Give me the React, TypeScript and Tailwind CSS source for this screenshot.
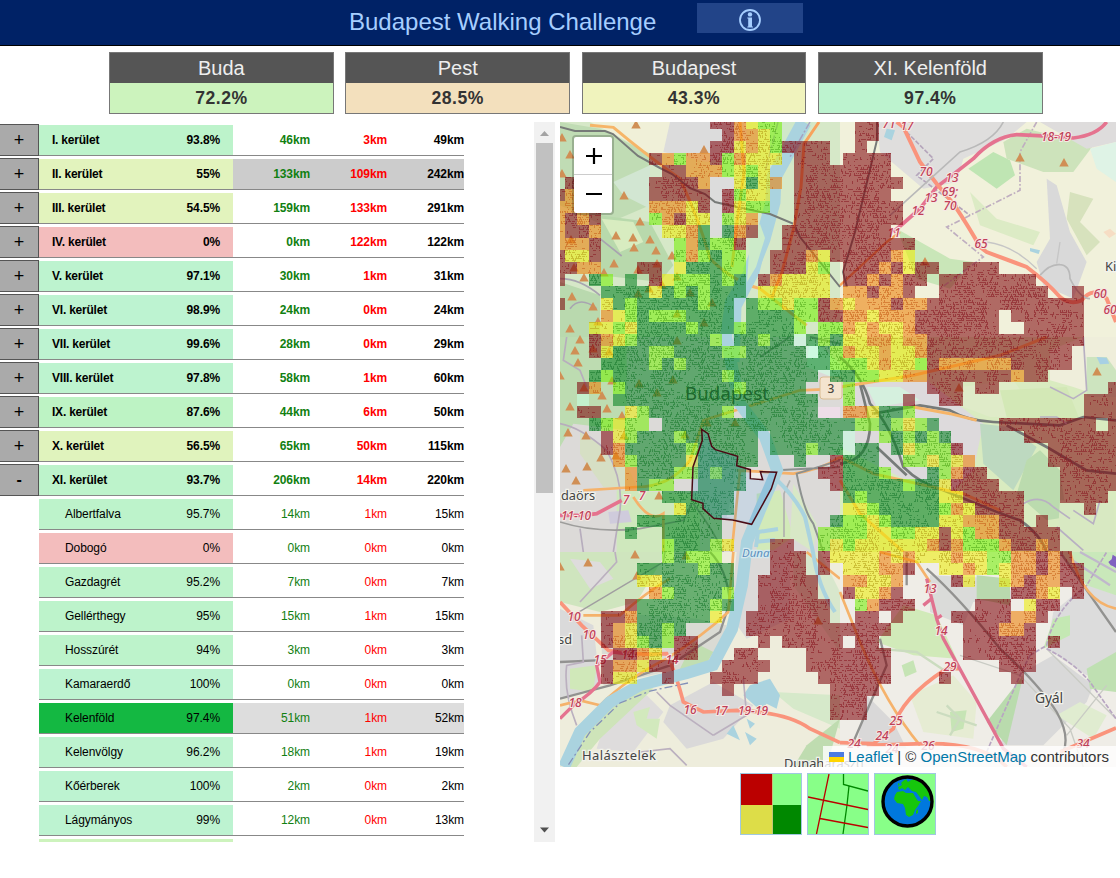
import React from "react";

type Row = { name: string; pct: string; done: string; left: string; total: string; tint: string; sub?: boolean; open?: boolean; rest?: string };

const MINT = "bg-[#bdf3cb]";
const LIME = "bg-[#e2f3bd]";
const ROSE = "bg-[#f3bdbd]";

const rows: Row[] = [
  { name: "I. kerület", pct: "93.8%", done: "46km", left: "3km", total: "49km", tint: MINT },
  { name: "II. kerület", pct: "55%", done: "133km", left: "109km", total: "242km", tint: LIME, rest: "bg-[#cccccc]" },
  { name: "III. kerület", pct: "54.5%", done: "159km", left: "133km", total: "291km", tint: LIME },
  { name: "IV. kerület", pct: "0%", done: "0km", left: "122km", total: "122km", tint: ROSE },
  { name: "V. kerület", pct: "97.1%", done: "30km", left: "1km", total: "31km", tint: "bg-[#bdf3cf]" },
  { name: "VI. kerület", pct: "98.9%", done: "24km", left: "0km", total: "24km", tint: "bg-[#bdf3d1]" },
  { name: "VII. kerület", pct: "99.6%", done: "28km", left: "0km", total: "29km", tint: "bg-[#bdf3d1]" },
  { name: "VIII. kerület", pct: "97.8%", done: "58km", left: "1km", total: "60km", tint: "bg-[#bdf3cf]" },
  { name: "IX. kerület", pct: "87.6%", done: "44km", left: "6km", total: "50km", tint: "bg-[#bdf3c4]" },
  { name: "X. kerület", pct: "56.5%", done: "65km", left: "50km", total: "115km", tint: "bg-[#e0f3bd]" },
  { name: "XI. kerület", pct: "93.7%", done: "206km", left: "14km", total: "220km", tint: MINT, open: true },
  { name: "Albertfalva", pct: "95.7%", done: "14km", left: "1km", total: "15km", tint: MINT, sub: true },
  { name: "Dobogó", pct: "0%", done: "0km", left: "0km", total: "0km", tint: ROSE, sub: true },
  { name: "Gazdagrét", pct: "95.2%", done: "7km", left: "0km", total: "7km", tint: MINT, sub: true },
  { name: "Gellérthegy", pct: "95%", done: "15km", left: "1km", total: "15km", tint: MINT, sub: true },
  { name: "Hosszúrét", pct: "94%", done: "3km", left: "0km", total: "3km", tint: MINT, sub: true },
  { name: "Kamaraerdő", pct: "100%", done: "0km", left: "0km", total: "0km", tint: "bg-[#bdf3d1]", sub: true },
  { name: "Kelenföld", pct: "97.4%", done: "51km", left: "1km", total: "52km", tint: "bg-[#14b842]", sub: true, rest: "bg-[#dddddd]" },
  { name: "Kelenvölgy", pct: "96.2%", done: "18km", left: "1km", total: "19km", tint: "bg-[#bdf3cf]", sub: true },
  { name: "Kőérberek", pct: "100%", done: "2km", left: "0km", total: "2km", tint: "bg-[#bdf3d1]", sub: true },
  { name: "Lágymányos", pct: "99%", done: "12km", left: "0km", total: "13km", tint: "bg-[#bdf3d1]", sub: true },
  { name: "", pct: "", done: "", left: "", total: "", tint: "bg-[#cdf3bd]", sub: true },
];

const cards = [
  { title: "Buda", pct: "72.2%", tint: "bg-[#ccf3bd]" },
  { title: "Pest", pct: "28.5%", tint: "bg-[#f3e0bd]" },
  { title: "Budapest", pct: "43.3%", tint: "bg-[#f0f3bd]" },
  { title: "XI. Kelenföld", pct: "97.4%", tint: "bg-[#bdf3cf]" },
];

/* Grid rows from north to south; each run is "startColumn:cells". */
const grid = [
  "13:RROYLL 25:RR",
  "14:ROOYL 25:RR",
  "13:RRYOYLRRRR 25:R",
  "8:ROLOORLOYYY 20:RRR 24:RRRR",
  "9:RROOOLYLY 20:RRRRRRRR",
  "1:R 8:RRRRO 15:YGYO 20:RRRRRRRRR",
  "0:ROOO 8:RRRRR 14:RLYY 20:RRRRRRRR",
  "0:OOOO 8:OOOYR 14:RYLL 20:RRRRRRRRR",
  "0:OROR 8:LORYY 14:LYO 20:RRRRRRRRR",
  "0:ORRO 9:YYOG 14:GOR 19:RRRRRRRRR",
  "0:OOOR 10:LOGLLR 19:RRRRRRRRRRR",
  "0:RYYR 10:LOLGLL 18:RRROYRRRRROY",
  "0:RROO 7:RR 10:YGGGLL 18:RRRYL 24:RRRORYRR 34:RRR",
  "0:R 3:GL 6:G 8:RYLLLGLG 17:ROYYYY 24:RRORORR 32:RRRRRRRR",
  "4:GGGGYGLGLGGG 17:YYYYYY 24:OOROOR 32:RRRRRRRRR 43:R",
  "0:R 4:YGLGGGGGLGG 16:GLLYLLROYOOOROORRRRRRRRRRRRR",
  "4:OYLGLLLGGGG 16:GGGGLLRROOYOOORRRRRRR 38:RRRRRR",
  "3:YYLYGGGGLGGGLGGGGL 22:LLOYOYYORRRRRRR 39:RRRRR",
  "3:ROYLGGGGGGL 15:GGLGGWGLGYYOOYOORRRRRRRRRRRRR",
  "3:RYGGGLLGGGGLLGGGGGWGLOYYOYYORRRRRRRRRRRR",
  "4:GGGGLGLGGGGGGGGGGGGLLLYOYYLROOOOOORRRRR",
  "3:GLGGGGGGGGGLGGGGGGG 23:GGLLYYOORRRRRRRORR",
  "2:RO 5:LGGGGGGGGGLGGGGG 24:L 31:RRR 35:RR 46:R",
  "2:W 5:GGGGGGGGGGGGGGGGG 24:L 29:R 32:RR 44:RRR",
  "2:RR 6:YLGGGGGGL 16:GGGGGG 24:OOYGGL 44:RRR",
  "3:GLYLL 9:GGGGGGGGGGGGGGGGLLGLYLG 37:RRRRRRRR 46:R",
  "4:RYLGGGLGGGGGG 18:GGGGGGW 27:LGLGLG 39:RRRRRRRR",
  "4:ROGGGGGLGGGGG 18:GGGLGGWGG 28:GYLLLR 41:RRRRRR",
  "5:OLGGGGYGGGGG 20:G 23:RGGG 29:LLYLYO 41:RRRRRR",
  "6:OGGGLLGLGG 22:RRGGGL 31:GLORR 42:RRRRR",
  "6:OGLL 12:GGGG 23:RGGGGGLGGYRRRR 42:RRRRR",
  "9:GGGGGG 24:GLGGGGGGYYRRRRR 42:RRRR",
  "10:YGGGG 24:YYLGGGGGLOYRRRR 44:R",
  "7:GGGGGGG 23:GLLYLGGGGYYOOORR 40:R",
  "6:G 9:GGGGG 22:LLLLYYLLYYRYLOORRRRR",
  "9:LGGGLY 18:RR 22:LYLYYYYYYOROLLLORROR",
  "9:LGLLL 18:RRR 22:RYYYYOYOYYYOYYLLOOROR",
  "7:GGGGGLGG 18:RRR 22:R 24:YYYOOR 32:YYOYLYOORORR",
  "7:YYGGGGGG 17:RRRRR 24:OOYYO 33:RY 37:YOROORR",
  "8:OLGGGGL 17:RRRRR 24:RYYOR 38:RROY 43:R",
  "6:RGGGGGGLG 17:RRRRRR 25:LORRR 35:RRR 39:YRR",
  "4:RROGGGGGGY 16:RRRRRRR 25:RR 28:R 33:RRRRROOR",
  "4:ROYGGLG 16:RRRRRRRRRRRR 34:RRROOR",
  "4:ROYLGLRR 17:R 19:RRRRR 25:RR 34:RRRRRR 41:R",
  "5:RROY 10:RR 15:RR 21:RRRRRRR 34:RRRRRR",
  "4:ROOYRR 14:RRRR 21:RRRRRRR 37:RRR",
  "4:RYY 9:R 13:RRRR 22:RRRRRR 32:R 38:R",
  "14:R 23:RRRR",
  "23:RRR",
  "23:RRR",
];

const fills: Record<string, string> = { R: "#7c0008", O: "#ee7c00", Y: "#eeee00", L: "#72f000", G: "#007e1c", W: "#c8ffe0" };
const streets: Record<string, string> = { R: "#8b1c24", O: "#c8621c", Y: "#b8a41c", L: "#55ac1c", G: "#1c7c30" };

type Cell = { x: number; y: number; kind: string };

const edgeX = (c: number) => (c <= 0 ? 0 : Math.round(5 + (c - 1) * 12.067));
const edgeY = (r: number) => (r <= 0 ? 0 : Math.round(7 + (r - 1) * 12.06));

const cells: Cell[] = [];
grid.forEach((line, y) =>
  line.split(" ").forEach((run) => {
    const [start, kinds] = run.split(":");
    kinds.split("").forEach((kind, i) => cells.push({ x: Number(start) + i, y, kind }));
  })
);

function buildShapes() {
  const area: Record<string, string> = {};
  const lines: Record<string, string> = {};
  const taken = new Set(cells.map((c) => c.x + "," + c.y));
  let seed = 1234567;
  const rnd = () => {
    seed = (seed * 1103515245 + 12345) % 2147483648;
    return seed / 2147483648;
  };
  cells.forEach(({ x, y, kind }) => {
    const x0 = edgeX(x);
    const x1 = edgeX(x + 1);
    const y0 = edgeY(y);
    const y1 = edgeY(y + 1);
    area[kind] = (area[kind] || "") + `M${x0} ${y0}H${x1}V${y1}H${x0}Z`;
    if (kind === "W") return;
    const border = !taken.has(x + 1 + "," + y) || !taken.has(x - 1 + "," + y) || !taken.has(x + "," + (y + 1)) || !taken.has(x + "," + (y - 1));
    const roll = rnd();
    const density = border ? roll * 0.45 : roll < 0.15 ? 0.1 : 0.4 + roll * 0.25;
    let d = "";
    for (let j = y0; j < y1; j += 2) {
      for (let i = x0 + ((j >> 1) & 1); i < x1; i += 2) {
        if (rnd() > density) continue;
        const way = rnd();
        const w = Math.min(3, x1 - i);
        const h = Math.min(3, y1 - j);
        d += way < 0.4 ? `M${i} ${j}h${w}v1h-${w}z` : way < 0.8 ? `M${i} ${j}h1v${h}h-1z` : `M${i} ${j}h1v1h-1z`;
      }
    }
    lines[kind] = (lines[kind] || "") + d;
  });
  return { area, lines };
}
const shapes = buildShapes();

const peaks: [number, number][] = [
  [76, 3], [2, 16], [10, 33], [2, 52], [144, 28], [64, 74], [80, 100], [56, 114], [73, 116], [90, 118], [74, 126], [96, 129], [112, 134], [54, 142], [97, 142], [78, 148], [44, 151], [24, 156], [14, 146], [11, 118], [117, 155], [102, 163], [89, 167], [78, 172], [130, 171], [12, 175], [33, 185], [38, 200], [152, 181], [117, 192], [144, 201], [10, 207], [20, 218], [15, 229], [18, 241], [0, 254], [117, 219], [33, 227], [49, 230], [52, 259], [24, 266], [79, 262], [97, 271], [113, 258], [42, 274], [10, 285], [47, 287], [62, 294], [147, 301], [175, 301], [125, 313], [64, 314], [8, 311], [26, 314], [56, 334], [41, 336], [27, 345], [6, 347], [16, 359], [99, 374], [28, 441], [75, 433], [126, 434], [77, 454], [0, 445], [258, 499], [460, 36], [504, 41], [365, 140], [399, 266], [537, 250],
];

const quads: [number, number][] = [[0, 0], [280, 0], [0, 215], [280, 215], [0, 430], [280, 430]];

/* One quadrant of the base map, on a 3x finer canvas. */
function Quad({ n, children }: { n: number; children: React.ReactNode }) {
  return <g transform={`translate(${quads[n][0]} ${quads[n][1]}) scale(0.33333)`}>{children}</g>;
}

function RoadNo({ x, y, children }: { x: number; y: number; children: string }) {
  return (
    <text x={x} y={y} fontSize="12" fontStyle="italic" fontWeight="500" fill="#bf4058" stroke="#f6e9e4" strokeWidth="2" paintOrder="stroke" textAnchor="middle">
      {children}
    </text>
  );
}

function BaseMap() {
  return (
    <>
      <rect width="556" height="645" fill="#eeeadf" />
      <Quad n={0}>
        <path d="M0 0H840V645H0Z" fill="#d6e8c8" />
        <path d="M90 0H460L440 100L270 95L150 30Z" fill="#f0f0d8" />
        <path d="M330 0H560V90L440 120L310 90Z" fill="#dcdcdc" />
        <path d="M0 0L120 20L270 95V250L130 310L0 250Z" fill="#c0dcb4" />
        <path d="M160 180L270 130V260L190 220Z" fill="#d2e6d2" />
        <path d="M120 280L270 300L340 430L300 480L120 460Z" fill="#b8d9ac" />
        <path d="M125 290L220 300L250 360L180 390Z" fill="#d8ecc0" />
        <path d="M0 480L120 520V645H0Z" fill="#b9d9ae" />
        <path d="M450 160L525 170V340L450 345Z" fill="#dcdcdc" />
        <path d="M660 0H760L700 130L640 80Z" fill="#d0e8c8" />
        <path d="M0 470Q60 470 120 520M30 560Q60 520 110 560M120 350L185 402" fill="none" stroke="#a8a4b0" strokeWidth="5" />
        <path d="M90 10L160 16Q260 100 360 170Q420 300 450 410Q520 480 600 500L740 610" fill="none" stroke="#f6b568" strokeWidth="9" />
      </Quad>
      <Quad n={1}>
        <path d="M0 0H828V645H0Z" fill="#f1f1db" />
        <path d="M110 0H560L500 50L370 110L350 180L250 200L120 90Z" fill="#dfdedd" />
        <path d="M460 90L510 115L525 160L470 200L385 140Z" fill="#bfe5b3" />
        <path d="M490 60L560 20L760 70L700 150L610 150L500 110Z" fill="#cde3bb" />
        <path d="M600 0H828V60L740 80Z" fill="#dedcdc" />
        <path d="M750 80L828 60V180L770 140Z" fill="#dff3e6" />
        <path d="M620 170L650 190L690 330L740 420L700 530L610 490L590 420L630 350Z" fill="#d9d9d9" />
        <path d="M690 210L760 230L720 300L780 360L740 400L680 290Z" fill="#d7e2bd" />
        <path d="M170 320L330 410L400 420L330 500L230 470Z" fill="#c9e6b8" />
        <path d="M390 210L470 290L600 330L580 370L420 310Z" fill="#dcebc5" />
        <path d="M140 20L165 25L155 55L132 45Z" fill="#aad3df" />
        <path d="M570 378L600 385L596 396L570 388Z" fill="#aad3df" />
        <path d="M790 330L810 320L828 335L808 348Z" fill="#f6ddc4" />
        <path d="M590 0L540 90V205L320 315L430 405L300 500" fill="none" stroke="#bfaec0" strokeWidth="5" strokeDasharray="18 6 5 6" />
        <path d="M200 30L280 110L230 160L390 280" fill="none" stroke="#b5a5bb" strokeWidth="5" strokeDasharray="14 5" />
        <path d="M160 330L240 260L290 195Q350 150 400 110Q460 45 530 38Q630 42 700 48Q770 40 800 0" fill="none" stroke="#e5738f" strokeWidth="11" />
        <path d="M170 0L190 15L240 120L290 185L340 245Q390 320 420 375L440 390L560 435Q620 480 660 525Q690 550 725 535Q760 490 800 530L828 600" fill="none" stroke="#fa947c" strokeWidth="12" />
        <path d="M0 490L140 360L180 330" fill="none" stroke="#f8a35c" strokeWidth="7" />
        <path d="M150 280L360 90Q460 60 490 0M600 460Q630 425 660 428Q690 430 690 470Q720 530 750 530" fill="none" stroke="#b9b9b9" strokeWidth="5" />
        <path d="M660 360L650 425M440 360Q520 370 590 440" fill="none" stroke="#c6c6c6" strokeWidth="4" />
      </Quad>
      <Quad n={2}>
        <path d="M0 0H840V645H0Z" fill="#dcdad8" />
        <path d="M0 0H200V280L40 260L0 330Z" fill="#bddcb1" />
        <path d="M60 280L200 380L230 450H130L60 350Z" fill="#d6dfc4" />
        <path d="M170 460L420 470V645H170Z" fill="#cfe8bd" />
        <path d="M530 400L640 400L590 560L500 540Z" fill="#f0eae6" />
        <path d="M590 470L660 460L700 600L640 640H590Z" fill="#d2eab9" />
        <path d="M700 440L770 560L760 645L690 600Z" fill="#d8e8c6" />
        <path d="M740 210L840 210V250H740Z" fill="#eedde8" />
        <path d="M750 0L840 80V130L740 90Z" fill="#d4f2e0" />
        <path d="M145 525L205 520L215 555L150 560Z" fill="#cfcbdc" />
        <path d="M20 0L10 70L60 100L80 150M0 260Q60 270 140 340Q190 430 180 520L160 645M60 575L70 645" fill="none" stroke="#b7adbd" strokeWidth="5" />
        <path d="M0 555Q110 590 240 575L370 550L395 500M400 500Q460 580 490 645" fill="none" stroke="#9d9d9b" strokeWidth="5" />
        <path d="M0 535H70L110 530L185 490" fill="none" stroke="#e5738f" strokeWidth="11" />
        <path d="M70 460L230 450Q330 450 390 370L430 250L720 160L840 155M220 480Q270 560 310 530V645M530 400L700 410Q780 400 840 360M540 400L515 645" fill="none" stroke="#f5b26b" strokeWidth="8" />
        <path d="M600 60L690 0M840 20L750 0M650 400L840 390M840 370L710 410Q730 520 760 560L790 645" fill="none" stroke="#8d9190" strokeWidth="6" />
        <path d="M690 430L672 470V600" fill="none" stroke="#b0b0ae" strokeWidth="5" />
      </Quad>
      <Quad n={3}>
        <path d="M0 0H828V645H0Z" fill="#d9ebc0" />
        <path d="M0 130L260 130L430 260L400 400L330 470L200 430L0 330Z" fill="#dddadc" />
        <path d="M80 150L180 150L240 190L110 210Z" fill="#d5f0de" />
        <path d="M360 150L520 130L600 240L450 240L370 210Z" fill="#dfebc8" />
        <path d="M480 160L680 150L720 250L500 240Z" fill="#d3e8b6" />
        <path d="M420 260L510 270L590 330L520 460L430 380Z" fill="#bdd9c0" />
        <path d="M600 340L660 400L680 540L620 550L530 470L560 370Z" fill="#bbdbae" />
        <path d="M630 40L730 0H828V130L760 170L700 150L630 130Z" fill="#efeedb" />
        <path d="M740 60L800 60L828 100V180L740 180Z" fill="#cde4bf" />
        <path d="M770 60L800 62L808 80L780 82Z" fill="#a7d0e4" />
        <path d="M660 490L820 490L828 645H650Z" fill="#d8e9c2" />
        <path d="M0 60Q70 120 90 200Q150 260 190 390Q240 440 310 460Q480 530 540 550Q600 590 620 645M0 380Q90 370 90 260L60 140M100 230L240 205L330 220Q380 250 460 255L660 265L730 240L828 250M500 265L620 330L740 400L828 410M110 330L200 415" fill="none" stroke="#777b79" strokeWidth="8" />
        <path d="M0 150L220 115L480 55L620 0M220 210L330 230L410 250M0 360L100 410L320 460L370 470L480 520M0 430L60 530L190 645" fill="none" stroke="#f6b568" strokeWidth="9" />
        <path d="M550 500Q600 470 640 510L690 545M630 150L700 185L740 160L730 0M600 240L650 240L680 260M700 520L760 560L780 490M650 570L730 640" fill="none" stroke="#b8b0c2" strokeWidth="5" />
      </Quad>
      <Quad n={4}>
        <path d="M0 0H840V645H0Z" fill="#eeeddc" />
        <path d="M0 0H320L230 150L120 180L0 150Z" fill="#cfe5be" />
        <path d="M30 20L120 30L160 80L90 110Z" fill="#dedcdc" />
        <path d="M0 170L100 220L120 400L0 440Z" fill="#dadada" />
        <path d="M30 350L110 340L100 420L30 410Z" fill="#d0e8b9" />
        <path d="M120 180L410 200L500 220L460 330L130 400Z" fill="#dadbd4" />
        <path d="M400 270L460 300L430 350L350 370Z" fill="#c1deb1" />
        <path d="M530 0H690V200L560 260L510 190Z" fill="#dcdad9" />
        <path d="M150 460L260 430L310 480L220 600L110 590Z" fill="#dedcdc" />
        <path d="M330 460L460 390L580 460L490 560L380 590L310 510Z" fill="#dad9d9" />
        <path d="M80 520L140 470L240 400L280 410L120 560L50 645H20Z" fill="#cee4b9" />
        <path d="M220 480L270 465L260 500L300 500L290 560L230 520Z" fill="#d2e9bd" />
        <path d="M640 420L840 430V530L700 470Z" fill="#d6e9ca" />
        <path d="M740 580L840 500L800 645H700Z" fill="#bfdcb0" />
        <path d="M700 0H780L840 120V300L700 100Z" fill="#d8e7cc" />
        <path d="M570 400L630 380L660 430L650 470L620 455L600 475L550 430Z" fill="#aad3df" />
        <path d="M520 520L540 565L500 545ZM560 500L585 515L570 530ZM555 540L590 560L570 580Z" fill="#aad3df" />
        <path d="M0 330L110 325M0 440L150 400L330 340L480 240L510 150Q500 50 450 0" fill="none" stroke="#929290" strokeWidth="7" />
        <path d="M40 190L200 95L310 30L315 0" fill="none" stroke="#a09ea0" strokeWidth="4" />
        <path d="M60 150L170 30L165 0M380 640L330 590L240 600M460 550L330 460L290 420M460 550L560 490L550 380M50 520Q10 420 20 340L70 330L65 250" fill="none" stroke="#bbb0bf" strokeWidth="5" />
        <path d="M70 190H180Q260 120 330 80M0 460L60 445L120 460Q200 380 320 320Q430 250 505 180L520 0M740 0L840 80" fill="none" stroke="#f5b26b" strokeWidth="8" />
        <path d="M0 150L65 220L145 295Q220 310 320 305Q350 370 370 450L430 480L530 475Q680 480 750 530L840 572" fill="none" stroke="#fa947c" strokeWidth="11" />
        <path d="M0 500L40 460Q100 420 120 390L110 340L160 300L230 310" fill="none" stroke="#e5738f" strokeWidth="10" />
      </Quad>
      <Quad n={5}>
        <path d="M0 0H828V645H0Z" fill="#efede7" />
        <path d="M190 160L290 190L350 320L220 310L110 270Z" fill="#d1eab9" />
        <path d="M270 70L500 80L520 140L400 150L370 220L270 180Z" fill="#dadbd9" />
        <path d="M410 70L510 80V160L410 140Z" fill="#b9d9ae" />
        <path d="M550 360L640 310L760 400L740 450L610 580H480Z" fill="#d9d9d9" />
        <path d="M640 180L760 80L828 120V380L740 370L620 290Z" fill="#dcdcdc" />
        <path d="M740 350L828 300V420L750 410Z" fill="#bfe0b2" />
        <path d="M640 200L690 190L690 250L610 290Z" fill="#c4e8b3" />
        <path d="M660 0H828V130L740 100Z" fill="#c9e8ba" />
        <path d="M550 370L500 580L440 510Z" fill="#b9dbad" />
        <path d="M80 430L160 510L200 590L50 580Z" fill="#d9d8d8" />
        <path d="M210 430L340 370L410 450L400 560L250 540Z" fill="#e6ecd3" />
        <path d="M650 490L720 450L800 490L760 560Z" fill="#e0ecd0" />
        <path d="M185 340L220 325L230 360L195 375ZM330 480L380 475L370 530L335 540Z" fill="#c6e4b5" />
        <path d="M110 290L230 300L320 360M290 480L410 520M320 460L360 500L330 550" fill="none" stroke="#cbdcbf" strokeWidth="7" />
        <path d="M360 310L540 370L690 530L730 645M620 290L828 500M680 550L800 400" fill="none" stroke="#c9cbc4" strokeWidth="4" />
        <path d="M690 20L810 100M720 0L828 60" fill="none" stroke="#c0b8cc" strokeWidth="7" />
        <path d="M260 50Q360 140 480 290Q600 400 650 480Q690 550 670 600M120 260L140 340L40 570M660 0L828 240M200 0V100" fill="none" stroke="#929290" strokeWidth="7" />
        <path d="M570 310L620 280Q640 180 740 100L800 0M620 290Q700 330 750 390L828 500M570 310L540 370L440 600" fill="none" stroke="#b8a6c2" strokeWidth="5" strokeDasharray="14 5" />
        <path d="M120 0L230 30L270 90M0 120L60 270Q140 460 240 580M690 0Q730 150 828 170" fill="none" stroke="#f5b26b" strokeWidth="8" />
        <path d="M0 572L100 575L160 530Q180 440 320 350L360 350M80 580L250 575Q430 570 500 645M660 600L828 528" fill="none" stroke="#fa947c" strokeWidth="11" />
        <path d="M250 160L275 140L260 80M275 140L290 200L305 190M290 200L310 260L490 590L560 645" fill="none" stroke="#e1728f" strokeWidth="10" />
        <path d="M805 30L815 22L818 8L828 14V48L818 42L812 40Z" fill="#8060c0" />
      </Quad>
      <path d="M244 0L225 35L214 55L213 80L203 117L190 150" fill="none" stroke="#aad3df" strokeWidth="15" />
      <path d="M190 150L171 180L166 215L174 255L180 282L205 315L217 348L200 388L187 420L182 463L172 507L153 543L127 551L80 563L50 580L20 610L4 645" fill="none" stroke="#aad3df" strokeWidth="12" />
      <path d="M207 105L196 150L178 185L176 240" fill="none" stroke="#aad3df" strokeWidth="7" />
      <path d="M200 102L205 116L196 145L187 160L190 115Z" fill="#ccebc9" />
      <path d="M217 358Q235 375 245 395L253 430Q258 465 275 490M196 425L198 410L218 407M195 420L215 418" fill="none" stroke="#aad3df" strokeWidth="4" />
      <path d="M218 0L205 50M250 0L230 35" fill="none" stroke="#a6a2c0" strokeWidth="1.5" strokeDasharray="8 2 2 2" />
      <path d="M128 561L90 569L60 581L30 610L7 645" fill="none" stroke="#8390b8" strokeWidth="1.3" strokeDasharray="8 3 2 3" />
      <path d="M280 165L240 115L234 102L210 92L168 83L155 80L145 72L130 66L112 52L100 46L78 34L53 12L45 9L15 9L0 5" fill="none" stroke="#777a78" strokeWidth="2" />
      <path d="M317 0V18L307 60L295 110L283 150L287 165" fill="none" stroke="#777a78" strokeWidth="2" />
      <path d="M259 0L244 22L241 65L234 105L222 150L212 175" fill="none" stroke="#f8a35c" strokeWidth="3" />
      <path d="M180 0L184 50L177 100L172 145" fill="none" stroke="#f6b568" strokeWidth="3" />
    </>
  );
}

function CityMap() {
  return (
    <svg width="556" height="645" viewBox="0 0 556 645" className="block" fontFamily="'Noto Sans', sans-serif">
      <BaseMap />
      {peaks.map(([x, y], i) => (
        <path key={i} d={`M${x} ${y - 5}L${x + 4.7} ${y + 3.5}H${x - 4.7}Z`} fill="#d08f55" />
      ))}
      <g fill="#444444" stroke="#f2f2ec" strokeWidth="2.5" paintOrder="stroke">
        <text x="125" y="278" fontSize="18.5" stroke="#d5e2d0" textLength="84">Budapest</text>
        <text x="1" y="378" fontSize="12.8">daörs</text>
        <text x="-2" y="522" fontSize="12.8">sd</text>
        <text x="22" y="638" fontSize="13" textLength="74">Halásztelek</text>
        <text x="224" y="646" fontSize="12.8">Dunaharaszti</text>
        <text x="475" y="581" fontSize="14" textLength="28">Gyál</text>
        <text x="545" y="149" fontSize="12.8">Ki</text>
        <text x="182" y="435" fontSize="11.5" fontStyle="italic" fill="#5d91bf" stroke="#d5e9ee">Duna</text>
      </g>
      <rect x="260" y="255" width="22" height="22" rx="3" fill="#f4e4cf" stroke="#d9bc92" />
      <text x="271" y="271" fontSize="12" fontWeight="500" fill="#4d493f" textAnchor="middle">3</text>
      <RoadNo x={329} y={6}>71</RoadNo>
      <RoadNo x={347} y={8}>17</RoadNo>
      <RoadNo x={366} y={54}>70</RoadNo>
      <RoadNo x={392} y={60}>13</RoadNo>
      <RoadNo x={390} y={74}>69;</RoadNo>
      <RoadNo x={390} y={88}>70</RoadNo>
      <RoadNo x={371} y={80}>13</RoadNo>
      <RoadNo x={358} y={93}>12</RoadNo>
      <RoadNo x={334} y={115}>11</RoadNo>
      <RoadNo x={421} y={126}>65</RoadNo>
      <RoadNo x={496} y={19}>18-19</RoadNo>
      <RoadNo x={540} y={176}>60</RoadNo>
      <RoadNo x={550} y={192}>60</RoadNo>
      <RoadNo x={66} y={382}>7</RoadNo>
      <RoadNo x={82} y={378}>7</RoadNo>
      <RoadNo x={16} y={398}>11-10</RoadNo>
      <RoadNo x={14} y={499}>10</RoadNo>
      <RoadNo x={29} y={517}>10</RoadNo>
      <RoadNo x={40} y={542}>15</RoadNo>
      <RoadNo x={68} y={537}>14</RoadNo>
      <RoadNo x={112} y={542}>14</RoadNo>
      <RoadNo x={15} y={585}>18</RoadNo>
      <RoadNo x={130} y={592}>16</RoadNo>
      <RoadNo x={161} y={593}>17</RoadNo>
      <RoadNo x={193} y={593}>19-19</RoadNo>
      <RoadNo x={370} y={471}>13</RoadNo>
      <RoadNo x={381} y={513}>14</RoadNo>
      <RoadNo x={390} y={549}>29</RoadNo>
      <RoadNo x={336} y={603}>25</RoadNo>
      <RoadNo x={322} y={618}>24</RoadNo>
      <RoadNo x={294} y={626}>24</RoadNo>
      <RoadNo x={332} y={631}>24</RoadNo>
      <RoadNo x={368} y={628}>26</RoadNo>
      <RoadNo x={523} y={626}>34</RoadNo>
      <g shapeRendering="crispEdges">
        {Object.keys(shapes.area).map((k) => (
          <path key={k} d={shapes.area[k]} fill={fills[k]} opacity={0.56} />
        ))}
        {Object.keys(shapes.lines).map((k) => (
          <path key={k} d={shapes.lines[k]} fill={streets[k]} opacity={0.6} />
        ))}
      </g>
      <Quad n={2}>
        <path
          d="M425 277L444 290L455 328L466 338L533 358L530 386L571 398V425L608 428L601 404L650 406L634 455L575 562L518 549L461 544L429 515V499L395 488L399 390L427 310Z"
          fill="#3388cc"
          fillOpacity="0.2"
          stroke="#4a0a14"
          strokeWidth="4.5"
        />
      </Quad>
    </svg>
  );
}

function DistrictRow({ row }: { row: Row }) {
  return (
    <div className={`flex h-8 w-[464px] shrink-0 text-xs text-black ${row.sub ? "tracking-[-0.08px]" : "font-bold tracking-[-0.12px]"}`}>
      {row.sub ? (
        <div className="w-[39px] shrink-0" />
      ) : (
        <button className="flex w-[39px] shrink-0 items-center justify-center border border-l-0 border-[#555] bg-[#aaaaaa] text-lg font-normal text-black">
          {row.open ? <span className="text-base font-bold">-</span> : "+"}
        </button>
      )}
      <div className="flex flex-1 border-b border-[#888] pt-px">
        <div className={`flex w-[194px] items-center justify-between pr-[13px] ${row.sub ? "pl-[26px]" : "pl-[13px]"} ${row.tint}`}>
          <span className={row.sub ? "" : "tracking-[-0.22px]"}>{row.name}</span>
          <span>{row.pct}</span>
        </div>
        <div className={`flex flex-1 items-center text-right ${row.rest || ""}`}>
          <span className="w-[77px] text-[#118011]">{row.done}</span>
          <span className="w-[77px] text-[#ff0000]">{row.left}</span>
          <span className="w-[77px]">{row.total}</span>
        </div>
      </div>
    </div>
  );
}

export default function App() {
  return (
    <div className="h-[878px] w-[1120px] overflow-hidden bg-white font-['Liberation_Sans',sans-serif]">
      <header className="flex h-[46px] border-b border-black bg-[#002266]">
        <h1 className="ml-[349px] w-[348px] pt-1 text-2xl leading-[36px] text-[#a6ceff]">Budapest Walking Challenge</h1>
        <button className="mt-[3px] flex h-[30px] w-[106px] items-center justify-center bg-[#224488] pt-[3px]">
          <svg width="24" height="24" viewBox="0 0 24 24">
            <circle cx="12" cy="12" r="10" fill="none" stroke="#a6ceff" strokeWidth="1.8" />
            <circle cx="12" cy="6.4" r="2.2" fill="#a6ceff" />
            <path d="M9.3 9.5H14V18.500H15V19.500H9.300V18.500H10.200V10.500H9.300Z" fill="#a6ceff" />
          </svg>
        </button>
      </header>

      <section className="ml-[109px] mt-1.5 flex h-[62px] gap-[11.5px]">
        {cards.map((c) => (
          <div key={c.title} className="flex w-[224.8px] flex-col border border-[#777] text-center">
            <div className="h-[30px] bg-[#555555] text-xl leading-[30px] text-[#eeeeee]">{c.title}</div>
            <div className={`flex-1 text-[17.6px] font-bold leading-[30px] tracking-[0.5px] text-[#333] ${c.tint}`}>{c.pct}</div>
          </div>
        ))}
      </section>

      <main className="mt-2 flex">
        <div className="flex h-[720px] w-[555px] overflow-hidden">
          <div className="flex w-[534px] flex-col gap-0.5 overflow-hidden pt-0.5">
            {rows.map((r, i) => (
              <DistrictRow key={i} row={r} />
            ))}
          </div>
          <div className="flex w-[21px] flex-col items-center bg-[#f1f1f1]">
            <svg width="21" height="21" viewBox="0 0 21 21" className="shrink-0">
              <path d="M6 14L10.5 9L15 14Z" fill="#a3a3a3" />
            </svg>
            <div className="h-[350px] w-[17px] bg-[#c1c1c1]" />
            <svg width="21" height="21" viewBox="0 0 21 21" className="mt-auto shrink-0">
              <path d="M6 6.500L10.5 11.500L15 6.500Z" fill="#505050" />
            </svg>
          </div>
        </div>

        <div className="ml-[5px] flex w-[556px] flex-col">
          <div className="relative h-[645px] w-[556px] overflow-hidden">
            <CityMap />
            <div className="absolute left-3 top-[13px] flex flex-col overflow-hidden rounded border-2 border-black/20 bg-white bg-clip-padding">
              <button className="flex h-[38px] w-[38px] items-center justify-center border-b border-[#ccc] pl-[2px]">
                <svg width="16" height="16" viewBox="0 0 16 16">
                  <path d="M0 8H16M8 0V16" stroke="#000" strokeWidth="2.2" />
                </svg>
              </button>
              <button className="flex h-[38px] w-[38px] items-center justify-center pl-[2px]">
                <svg width="16" height="16" viewBox="0 0 16 16">
                  <path d="M0 8H16" stroke="#000" strokeWidth="2.2" />
                </svg>
              </button>
            </div>
            <div className="absolute bottom-0 right-0 flex h-[21px] w-[293px] items-center bg-white/80 pl-[6px] text-[#333]">
              <svg width="15" height="10" viewBox="0 0 15 10" className="mr-1 shrink-0">
                <path d="M0 0H15V5H0Z" fill="#4c7be1" />
                <path d="M0 5H15V10H0Z" fill="#ffd500" />
              </svg>
              <span className="whitespace-pre text-[15px] leading-[21px]">
                <span className="text-[#0078a8]">Leaflet</span> | © <span className="text-[#0078a8]">OpenStreetMap</span> contributors
              </span>
            </div>
          </div>
          <div className="ml-[180px] mt-1.5 flex gap-[5px]">
            <button className="h-[62px] w-[62px] border border-[#a0c8e0] bg-[#88ff88]">
              <svg width="60" height="60" viewBox="0 0 60 60" className="block">
                <path d="M0 0H31V31H0Z" fill="#bb0000" />
                <path d="M0 31H31V60H0Z" fill="#dddd48" />
                <path d="M32 31H60V60H32Z" fill="#008800" />
                <path d="M31.5 0V60" stroke="#d8b070" strokeWidth="0.7" />
              </svg>
            </button>
            <button className="h-[62px] w-[62px] border border-[#a0c8e0] bg-[#88ff88]">
              <svg width="60" height="60" viewBox="0 0 60 60" className="block" fill="none" strokeWidth="1.3">
                <path d="M35.5 0V10.500L60 17M41 12L39 31L35 60" stroke="#008800" />
                <path d="M21 0L8.500 60M0 23L60 35.500M12 44.500L60 53.500" stroke="#bb0000" />
              </svg>
            </button>
            <button className="h-[62px] w-[62px] border border-[#a0c8e0] bg-[#88ff88]">
              <svg width="60" height="60" viewBox="0 0 60 60" className="block">
                <defs>
                  <clipPath id="globe">
                    <circle cx="32.5" cy="27.5" r="23.500" />
                  </clipPath>
                </defs>
                <circle cx="32.5" cy="27.5" r="24.500" fill="#0078dd" />
                <g clipPath="url(#globe)" fill="#16c60c">
                  <path d="M28 7L31 5L33 8L36 6L46 3L58 16V27L54 27L52 23L49 22L47 26L44 22L41 18L37 17L35 15L33 13L30 16L27 14L24 16L23 13L27 11L26 9Z" />
                  <path d="M22 18L28 17L31 19L38 19L41 24L43 27H46L43 32L40 36L38 41L34 43L31 41L30 34L28 30L22 29L19 25L20 21Z" />
                  <path d="M41 37L43 35V39L41 40ZM23 9L25 10L23 12Z" />
                </g>
                <circle cx="32.5" cy="27.5" r="24.500" fill="none" stroke="#000" strokeWidth="3.400" />
              </svg>
            </button>
          </div>
        </div>
      </main>
    </div>
  );
}
